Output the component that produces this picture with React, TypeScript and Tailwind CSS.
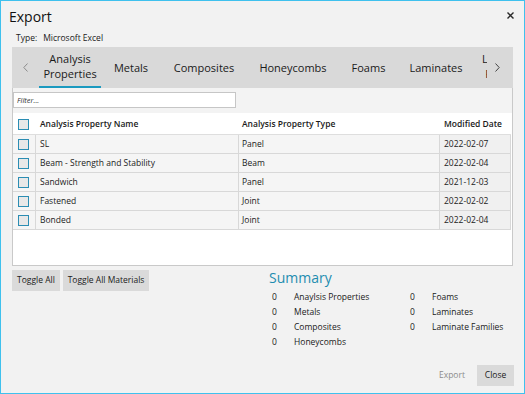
const rows = [
  { name: "SL", type: "Panel", date: "2022-02-07" },
  { name: "Beam - Strength and Stability", type: "Beam", date: "2022-02-04" },
  { name: "Sandwich", type: "Panel", date: "2021-12-03" },
  { name: "Fastened", type: "Joint", date: "2022-02-02" },
  { name: "Bonded", type: "Joint", date: "2022-02-04" },
];

const tabs = [
  { label: "Metals", w: "w-[60px]" },
  { label: "Composites", w: "w-[86px]" },
  { label: "Honeycombs", w: "w-[92px]" },
  { label: "Foams", w: "w-[59px]" },
  { label: "Laminates", w: "w-[76px]" },
];

const summary = [
  ["Anaylsis Properties", "Foams"],
  ["Metals", "Laminates"],
  ["Composites", "Laminate Families"],
  ["Honeycombs", null],
];

function Check() {
  return <div className="h-[11px] w-[11px] border-[1.5px] border-[#2b8db3] bg-[#e8e8e8]" />;
}

export default function App() {
  return (
    <div className="flex h-[394px] w-[525px] flex-col overflow-hidden border border-[#3fc1ee] bg-[#f2f2f2] font-['Open_Sans',sans-serif] text-[8.5px] text-[#1a1a1a]">
      {/* title */}
      <div className="flex h-[30px] items-center justify-between pl-[8px] pr-[10px]">
        <span className="text-[14px] text-[#111]">Export</span>
        <svg width="7" height="7" viewBox="0 0 7 7" className="mt-[-2px]">
          <path d="M0.5 0.5L6.5 6.5M6.5 0.5L0.5 6.5" stroke="#2a2a2a" strokeWidth="1.4" />
        </svg>
      </div>
      <div className="flex h-[14px] items-center pl-[15px]">
        <span>Type:</span>
        <span className="ml-[6px]">Microsoft Excel</span>
      </div>

      {/* tab bar */}
      <div className="mx-[11px] mt-[2px] flex h-[41px] bg-[#d9d9d9]">
        <div className="flex w-[27px] items-center justify-center">
          <svg width="5" height="9" viewBox="0 0 5 9">
            <path d="M4.5 0.5L0.8 4.5L4.5 8.5" fill="none" stroke="#8c8c8c" strokeWidth="1" />
          </svg>
        </div>
        <div className="flex w-[448px] overflow-hidden text-[11px] text-[#1a1a1a]">
          <div className="flex h-[41px] w-[62px] shrink-0 flex-col items-center justify-center border-b-2 border-[#1b9ac0] pb-[1px] leading-[15px]">
            <span>Analysis</span>
            <span>Properties</span>
          </div>
          {tabs.map((t) => (
            <div key={t.label} className={`flex h-[41px] ${t.w} shrink-0 items-center justify-center whitespace-nowrap pt-[1px]`}>
              {t.label}
            </div>
          ))}
          <div className="flex h-[41px] w-[64px] shrink-0 flex-col items-center justify-center pb-[3px] leading-[15px]">
            <span>Laminate</span>
            <span>Families</span>
          </div>
        </div>
        <div className="flex w-[20px] items-center justify-center">
          <svg width="5" height="9" viewBox="0 0 5 9">
            <path d="M0.5 0.5L4.2 4.5L0.5 8.5" fill="none" stroke="#444" strokeWidth="1" />
          </svg>
        </div>
      </div>

      {/* panel */}
      <div className="mx-[11px] flex h-[178px] flex-col border-x border-b border-[#c9c9c9] bg-[#f3f3f3]">
        <div className="pt-[4px]">
          <input
            readOnly
            placeholder="Filter..."
            className="h-[16px] w-[223px] border border-[#c6c6c6] bg-white pl-[3px] text-[7.5px] italic outline-none placeholder:text-[#333]"
          />
        </div>
        <div className="mt-[5px] flex-1 bg-white pr-[1px]">
          <div className="flex h-[22px] items-center border-b border-[#dedede] pt-[1px] font-semibold">
            <div className="flex w-[22px] items-center pl-[5px]">
              <Check />
            </div>
            <div className="w-[203px] pl-[5px]">Analysis Property Name</div>
            <div className="w-[201px] pl-[4px]">Analysis Property Type</div>
            <div className="flex-1 pl-[5px]">Modified Date</div>
          </div>
          {rows.map((r) => (
            <div key={r.name} className="flex h-[19px] border-b border-r border-[#d8d8d8] bg-[#f5f5f5] text-[#222]">
              <div className="flex w-[22px] items-center pl-[5px]">
                <Check />
              </div>
              <div className="flex w-[203px] items-center border-l border-[#d8d8d8] pl-[4px]">{r.name}</div>
              <div className="flex w-[201px] items-center border-l border-[#d8d8d8] pl-[3px]">{r.type}</div>
              <div className="flex flex-1 items-center border-l border-[#d8d8d8] bg-[#f0f0f0] pl-[4px]">{r.date}</div>
            </div>
          ))}
        </div>
      </div>

      {/* bottom */}
      <div className="flex">
        <div className="ml-[11px] mt-[4px] flex w-[257px] items-start gap-[3px]">
          <button className="h-[21px] w-[48px] bg-[#dadada] text-[#1a1a1a]">Toggle All</button>
          <button className="h-[21px] w-[86px] bg-[#dadada] text-[#1a1a1a]">Toggle All Materials</button>
        </div>
        <div className="mt-[3px]">
          <div className="text-[14px] leading-[18px] text-[#1e8db0]">Summary</div>
          <div className="mt-[2px] grid grid-cols-[25px_116px_22px_auto] leading-[15px]">
            {summary.map(([a, b]) => (
              <div key={a} className="contents">
                <span className="pl-[3px]">0</span>
                <span>{a}</span>
                <span>{b ? "0" : ""}</span>
                <span>{b ?? ""}</span>
              </div>
            ))}
          </div>
        </div>
      </div>

      <div className="mb-[7px] mr-[10px] mt-auto flex justify-end">
        <button className="mr-[6px] h-[21px] w-[38px] text-[#8c8c8c]">Export</button>
        <button className="h-[21px] w-[37px] bg-[#dadada] text-[#1a1a1a]">Close</button>
      </div>
    </div>
  );
}
